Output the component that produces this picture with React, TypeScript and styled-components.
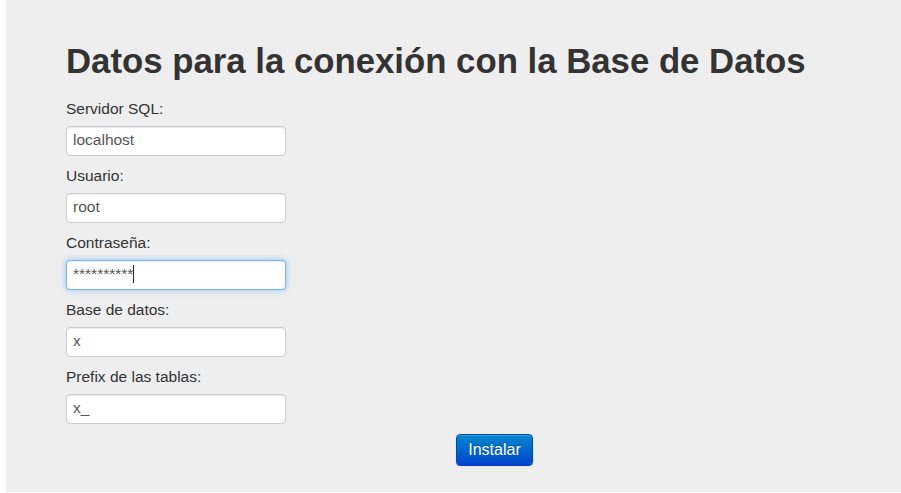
import React from "react";
import styled, { createGlobalStyle } from "styled-components";

const Global = createGlobalStyle`
  html, body { margin: 0; padding: 0; background: #ffffff; }
  body { font-family: "Liberation Sans", Arial, sans-serif; }
`;

const Panel = styled.div`
  margin-left: 6px;
  height: 492px;
  background: #eeeeee;
  box-sizing: border-box;
  padding: 37px 0 0 60px;
`;

const Title = styled.h1`
  margin: 0 0 14px 0;
  font-size: 34.75px;
  font-weight: bold;
  color: #333333;
  line-height: 48px;
`;

const Form = styled.form`
  display: flex;
  flex-direction: column;
`;

const Field = styled.div`
  display: flex;
  flex-direction: column;
  margin-bottom: 10px;
`;

const Label = styled.label`
  font-size: 15.5px;
  color: #333333;
  line-height: 20px;
  margin-bottom: 7px;
`;

const InputWrap = styled.div`
  position: relative;
  width: 220px;
`;

const Input = styled.input<{ $focused?: boolean }>`
  box-sizing: border-box;
  width: 220px;
  height: 30px;
  padding: 3px 6px 5px;
  font-family: "Liberation Sans", Arial, sans-serif;
  font-size: 15.5px;
  color: #555555;
  background: #ffffff;
  border: 1px solid ${(p) => (p.$focused ? "rgba(82,168,236,0.8)" : "#cccccc")};
  border-radius: 4px;
  box-shadow: ${(p) =>
    p.$focused
      ? "inset 0 1px 1px rgba(0,0,0,0.075), 0 0 6px rgba(82,168,236,0.6)"
      : "inset 0 1px 1px rgba(0,0,0,0.075)"};
  outline: none;
`;

const Caret = styled.span`
  position: absolute;
  left: 67px;
  top: 5px;
  width: 1px;
  height: 18px;
  background: #222222;
`;

const Actions = styled.div`
  width: 857px;
  display: flex;
  justify-content: center;
`;

const Button = styled.button`
  height: 32px;
  padding: 0 11px 1px;
  font-family: "Liberation Sans", Arial, sans-serif;
  font-size: 16px;
  color: #ffffff;
  background: linear-gradient(to bottom, #0088cc, #0044cc);
  border: 1px solid #0044cc;
  border-radius: 4px;
  box-shadow: inset 0 1px 0 rgba(255,255,255,0.2), 0 1px 2px rgba(0,0,0,0.05);
  text-shadow: 0 -1px 0 rgba(0,0,0,0.25);
`;

const fields = [
  { label: "Servidor SQL:", value: "localhost" },
  { label: "Usuario:", value: "root" },
  { label: "Contraseña:", value: "**********", focused: true },
  { label: "Base de datos:", value: "x" },
  { label: "Prefix de las tablas:", value: "x_" },
];

export default function App() {
  return (
    <>
      <Global />
      <Panel>
        <Title>Datos para la conexión con la Base de Datos</Title>
        <Form onSubmit={(e) => e.preventDefault()}>
          {fields.map((f) => (
            <Field key={f.label}>
              <Label>{f.label}</Label>
              <InputWrap>
                <Input readOnly value={f.value} $focused={f.focused} />
                {f.focused && <Caret />}
              </InputWrap>
            </Field>
          ))}
          <Actions>
            <Button type="submit">Instalar</Button>
          </Actions>
        </Form>
      </Panel>
    </>
  );
}
